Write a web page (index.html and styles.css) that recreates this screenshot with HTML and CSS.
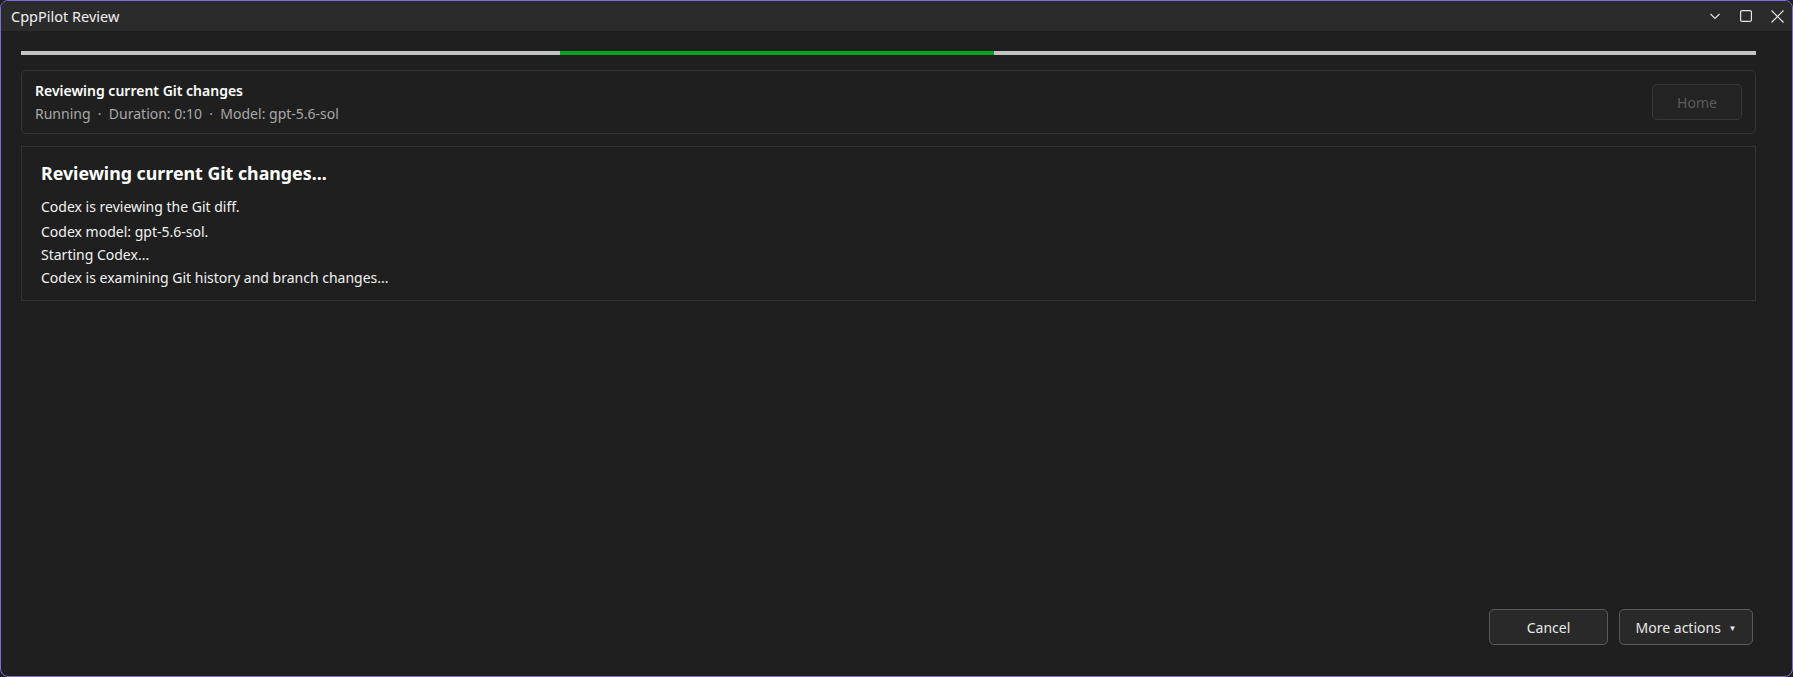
FILE: index.html
```html
<!DOCTYPE html>
<html lang="en">
<head>
    <meta charset="UTF-8">
    <meta name="viewport" content="width=device-width, initial-scale=1.0">
    <title>CppPilot Review</title>
    <link rel="stylesheet" href="styles.css">
</head>
<body>

<div class="window">
    <!-- タイトルバー -->
    <div class="titlebar">
        <span class="titlebar-text">CppPilot Review</span>
        <div class="window-controls">
            <svg class="ctrl" width="12" height="12" viewBox="0 0 12 12"><path d="M1.5 4 L6 8.5 L10.5 4" fill="none" stroke="#e6e6e6" stroke-width="1.2"/></svg>
            <svg class="ctrl" width="12" height="12" viewBox="0 0 12 12"><rect x="0.6" y="0.6" width="10.8" height="10.8" rx="1.5" fill="none" stroke="#e6e6e6" stroke-width="1.2"/></svg>
            <svg class="ctrl" width="13" height="13" viewBox="0 0 13 13"><path d="M0.5 0.5 L12.5 12.5 M12.5 0.5 L0.5 12.5" fill="none" stroke="#e6e6e6" stroke-width="1.2"/></svg>
        </div>
    </div>

    <div class="content">
        <div class="progress">
            <div class="progress-seg"></div>
            <div class="progress-seg active"></div>
            <div class="progress-seg"></div>
        </div>

        <div class="header-card">
            <div class="header-info">
                <div class="header-title">Reviewing current Git changes</div>
                <div class="header-meta">Running &nbsp;·&nbsp; Duration: 0:10 &nbsp;·&nbsp; Model: gpt-5.6-sol</div>
            </div>
            <button class="btn btn-disabled" disabled>Home</button>
        </div>

        <div class="log-card">
            <div class="log-title">Reviewing current Git changes...</div>
            <div class="log-line first">Codex is reviewing the Git diff.</div>
            <div class="log-line">Codex model: gpt-5.6-sol.</div>
            <div class="log-line tight">Starting Codex...</div>
            <div class="log-line tight">Codex is examining Git history and branch changes...</div>
        </div>

        <div class="footer">
            <button class="btn btn-cancel">Cancel</button>
            <button class="btn btn-more">More actions <span class="caret">▼</span></button>
        </div>
    </div>
</div>

</body>
</html>
```

FILE: styles.css
```css
html, body {
    margin: 0;
    height: 100%;
    background-color: #1f1f1f;
}
body {
    font-family: "Noto Sans", "Open Sans", sans-serif;
    color: #ffffff;
}
.window {
    box-sizing: border-box;
    height: 677px;
    border: 1px solid #7a6de0;
    border-radius: 8px;
    background-color: #1f1f1f;
    display: flex;
    flex-direction: column;
    overflow: hidden;
}
.titlebar {
    height: 30px;
    background-color: #2b2b2b;
    display: flex;
    align-items: center;
    justify-content: space-between;
    flex-shrink: 0;
}
.titlebar-text {
    font-size: 14.5px;
    margin-left: 10px;
    color: #f0f0f0;
}
.window-controls {
    display: flex;
    align-items: center;
    gap: 19px;
    margin-right: 8px;
}
.content {
    flex: 1;
    display: flex;
    flex-direction: column;
    padding: 20px 36px 31px 20px;
}
.progress {
    display: flex;
    height: 4px;
}
.progress-seg {
    background-color: #c3c3c3;
    width: 539px;
}
.progress-seg.active {
    background-color: #0aa320;
    width: 434px;
}
.progress-seg:last-child {
    flex: 1;
}
.header-card {
    margin-top: 15px;
    height: 62px;
    border: 1px solid #343434;
    border-radius: 5px;
    display: flex;
    align-items: center;
    justify-content: space-between;
    padding: 0 13px 0 13px;
}
.header-title {
    font-size: 14px;
    font-weight: 600;
    color: #ffffff;
    margin-top: -1px;
}
.header-meta {
    font-size: 14px;
    color: #a8a8a8;
    margin-top: 4px;
}
.btn {
    font-family: "Noto Sans", "Open Sans", sans-serif;
    font-size: 14px;
    border-radius: 5px;
    cursor: pointer;
    height: 36px;
}
.btn-disabled {
    width: 90px;
    background-color: #232323;
    border: 1px solid #383838;
    color: #5c5c5c;
    cursor: default;
}
.log-card {
    margin-top: 12px;
    border: 1px solid #333333;
    padding: 14px 19px 11px 19px;
}
.log-title {
    font-size: 17.8px;
    font-weight: 700;
    margin-bottom: 11px;
}
.log-line {
    font-size: 14px;
    line-height: 22px;
    margin-top: 3px;
    color: #f2f2f2;
}
.log-line.first {
    margin-top: 0;
}
.log-line.tight {
    margin-top: 1px;
}
.footer {
    margin-top: auto;
    display: flex;
    justify-content: flex-end;
    gap: 11px;
    padding-right: 3px;
}
.btn-cancel, .btn-more {
    background-color: #292929;
    border: 1px solid #5a5a5a;
    color: #e8e8e8;
}
.btn-cancel {
    width: 119px;
}
.btn-more {
    width: 134px;
}
.caret {
    font-size: 8px;
    vertical-align: 2px;
    margin-left: 4px;
}
```
